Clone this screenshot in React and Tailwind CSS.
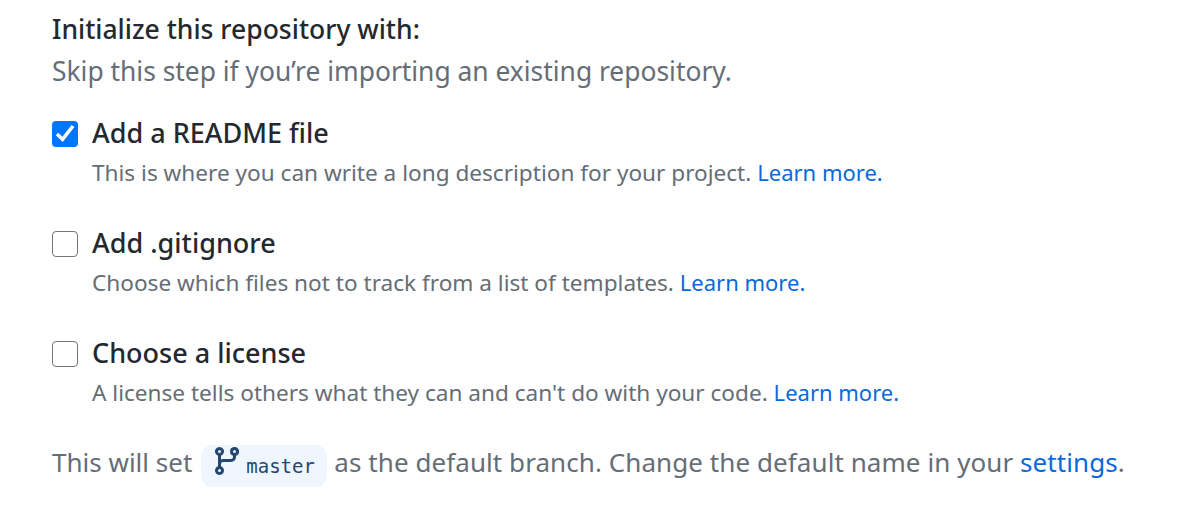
const Option = ({ title, text, checked }) => (
  <div className="flex gap-[14px]">
    <div className={`w-[26px] h-[26px] mt-[9px] rounded-[4px] flex items-center justify-center shrink-0 ${checked ? "bg-[#0075ff]" : "bg-white border border-[#767676]"}`}>
      {checked && (
        <svg width="26" height="26" viewBox="0 0 26 26" fill="none" stroke="#fff" strokeWidth="3.6">
          <polyline points="5,13 10.6,18.4 21,5" />
        </svg>
      )}
    </div>
    <div>
      <div className="text-[27px] leading-[42px] font-medium text-[#24292f]">{title}</div>
      <div className="text-[22.6px] leading-[36px] text-[#656d76]">
        {text} <span className="text-[22px] text-[#0969da]">Learn more.</span>
      </div>
    </div>
  </div>
)

export default function App() {
  return (
    <div className="w-[1204px] h-[507px] bg-white overflow-hidden pl-[52px] pt-[9px] font-['Noto_Sans',sans-serif]">
      <div className="text-[26.5px] leading-[40px] font-medium text-[#24292f]">Initialize this repository with:</div>
      <div className="text-[26.4px] leading-[44px] text-[#656d76]">Skip this step if you’re importing an existing repository.</div>
      <div className="flex flex-col gap-[31px] mt-[19px]">
        <Option checked title="Add a README file" text="This is where you can write a long description for your project." />
        <Option title="Add .gitignore" text="Choose which files not to track from a list of templates." />
        <Option title="Choose a license" text="A license tells others what they can and can't do with your code." />
      </div>
      <div className="flex items-center mt-[34px] text-[26px] text-[#656d76]">
        <span className="leading-[34px] pb-[8px]">This will set</span>
        <span className="flex gap-[3px] h-[42px] w-[126px] pl-[10px] ml-[9px] mr-[7px] rounded-[12px] bg-[#eff6fd] text-[#24466f]">
          <svg width="32" height="32" viewBox="0 0 16 16" fill="#24466f">
            <path d="M9.5 3.25a2.25 2.25 0 1 1 3 2.122V6A2.5 2.5 0 0 1 10 8.5H6a1 1 0 0 0-1 1v1.128a2.251 2.251 0 1 1-1.5 0V5.372a2.25 2.25 0 1 1 1.5 0v1.836A2.493 2.493 0 0 1 6 7h4a1 1 0 0 0 1-1v-.628A2.25 2.25 0 0 1 9.5 3.25Zm-6 0a.75.75 0 1 0 1.5 0 .75.75 0 0 0-1.5 0Zm8.25-.75a.75.75 0 1 0 0 1.5.75.75 0 0 0 0-1.5ZM4.25 12a.75.75 0 1 0 0 1.5.75.75 0 0 0 0-1.5Z" />
          </svg>
          <span className="font-['DejaVu_Sans_Mono',monospace] text-[19px] leading-[42px]">master</span>
        </span>
        <span className="leading-[34px] pb-[8px] tracking-[0.07px]">as the default branch. Change the default name in your <span className="text-[#0969da]">settings</span>.</span>
      </div>
    </div>
  )
}
